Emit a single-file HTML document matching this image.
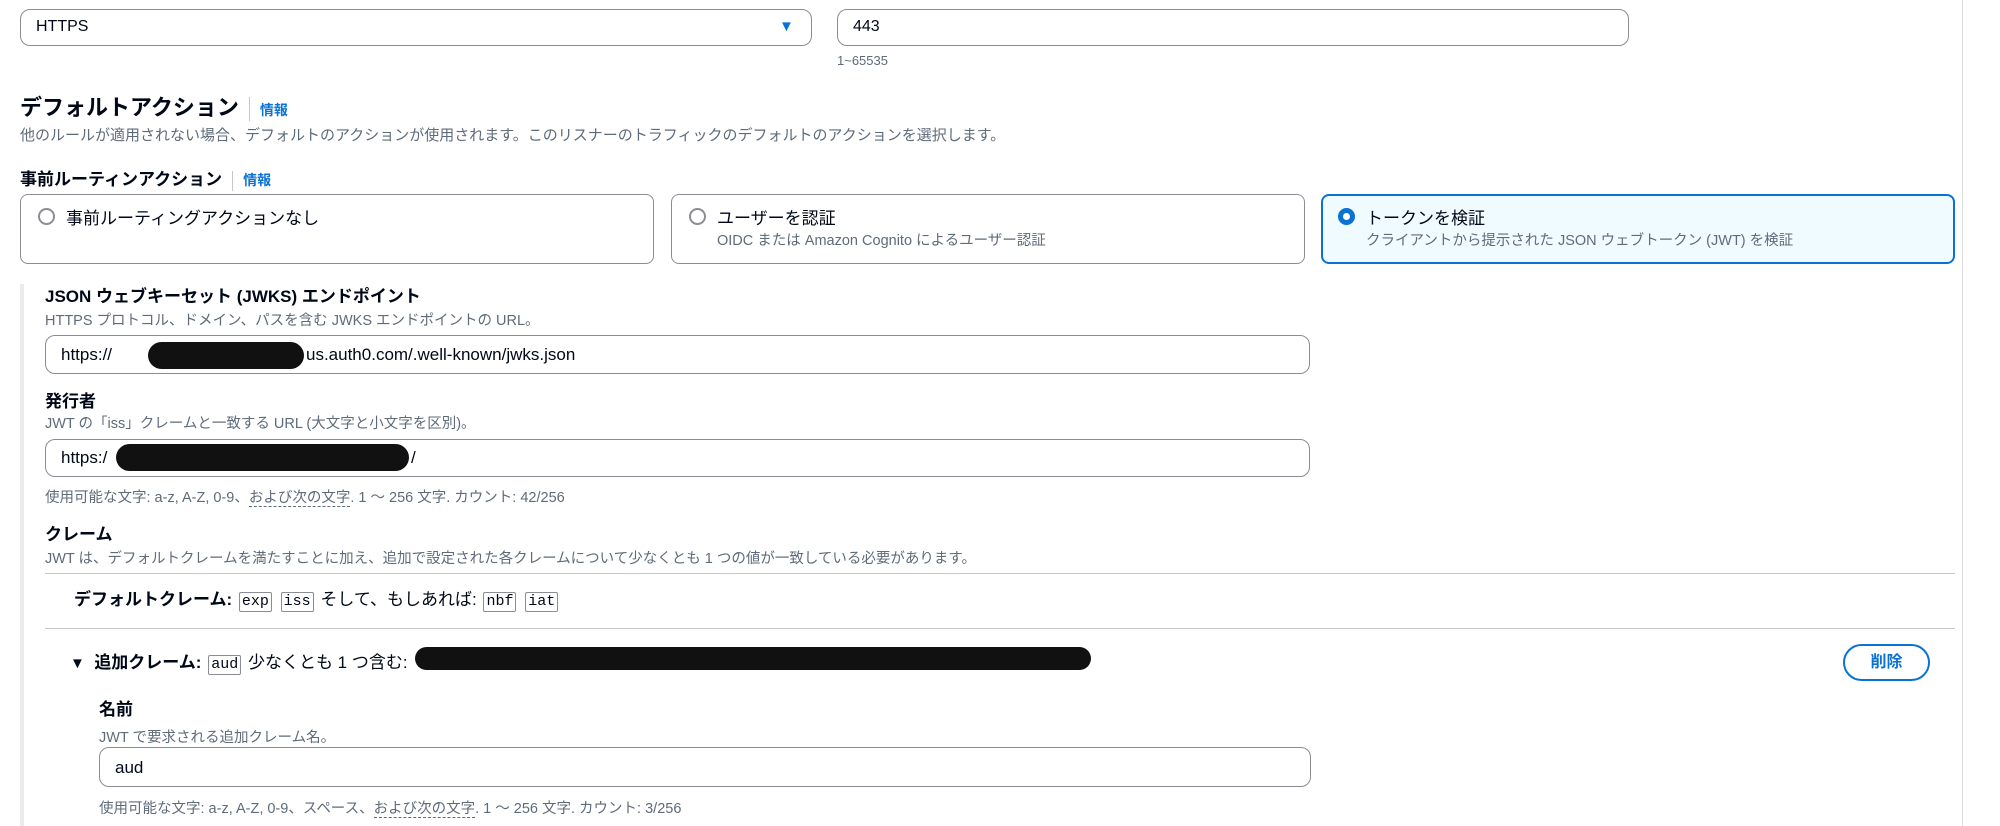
<!DOCTYPE html>
<html><head><meta charset="utf-8"><style>
*{margin:0;padding:0;box-sizing:border-box}
body{width:2000px;height:826px;background:#fff;position:relative;overflow:hidden;font-family:"Liberation Sans","Noto Sans CJK JP",sans-serif;color:#000716}
.a{position:absolute;white-space:nowrap}
.box{position:absolute;border:1px solid #8c8c94;border-radius:10px;background:#fff}
.lbl{font-weight:bold;font-size:17px}
.desc{font-size:14.5px;color:#5f6b7a}
.in{font-size:17px;line-height:1}
.blob{position:absolute;background:#111;border-radius:14px}
.tag{display:inline-block;border:1px solid #8c8c94;border-radius:2px;padding:0 2px;font-family:"Liberation Mono",monospace;font-size:15px;font-weight:normal;line-height:18px;margin:0 2px}
.link{color:#0972d3;font-weight:bold;font-size:14px}
.sep{display:inline-block;width:1px;height:20px;background:#c6c6cd;vertical-align:middle;margin:0 10px}
.dot{border-bottom:1px dashed #5f6b7a}
.radio{position:absolute;width:17px;height:17px;border:2px solid #8c8c94;border-radius:50%}
</style></head><body>
<div style="position:absolute;left:1962px;top:0;width:1px;height:826px;background:#dcdcdf"></div>

<div class="box" style="left:20px;top:9px;width:792px;height:37px"></div>
<div class="a in" style="left:36px;top:19px;font-size:16px">HTTPS</div>
<div class="a" style="left:779px;top:18px;color:#0972d3;font-size:15px">▼</div>
<div class="box" style="left:837px;top:9px;width:792px;height:37px"></div>
<div class="a in" style="left:853px;top:19px;font-size:16px">443</div>
<div class="a desc" style="left:837px;top:53px;font-size:13px">1~65535</div>

<div class="a" style="left:20px;top:94px;font-size:22px;font-weight:bold;line-height:28px">デフォルトアクション<span class="sep" style="height:24px"></span><span class="link">情報</span></div>
<div class="a" style="left:20px;top:124px;font-size:15px;color:#5f6b7a">他のルールが適用されない場合、デフォルトのアクションが使用されます。このリスナーのトラフィックのデフォルトのアクションを選択します。</div>
<div class="a" style="left:20px;top:165px;font-size:17px;font-weight:bold">事前ルーティンアクション<span class="sep"></span><span class="link">情報</span></div>

<div class="box" style="left:20px;top:194px;width:634px;height:70px;border-radius:8px"></div>
<div class="radio" style="left:38px;top:208px"></div>
<div class="a" style="left:66px;top:204px;font-size:17px">事前ルーティングアクションなし</div>
<div class="box" style="left:671px;top:194px;width:634px;height:70px;border-radius:8px"></div>
<div class="radio" style="left:689px;top:208px"></div>
<div class="a" style="left:717px;top:204px;font-size:17px">ユーザーを認証</div>
<div class="a desc" style="left:717px;top:229px">OIDC または Amazon Cognito によるユーザー認証</div>
<div class="box" style="left:1321px;top:194px;width:634px;height:70px;border-radius:8px;border:2px solid #0972d3;background:#f0fbff"></div>
<div class="radio" style="left:1338px;top:208px;border:5px solid #0972d3;background:#fff"></div>
<div class="a" style="left:1366px;top:204px;font-size:17px">トークンを検証</div>
<div class="a desc" style="left:1366px;top:229px">クライアントから提示された JSON ウェブトークン (JWT) を検証</div>

<div style="position:absolute;left:20px;top:284px;width:4px;height:542px;background:#e9ebed"></div>

<div class="a lbl" style="left:45px;top:282px">JSON ウェブキーセット (JWKS) エンドポイント</div>
<div class="a desc" style="left:45px;top:309px">HTTPS プロトコル、ドメイン、パスを含む JWKS エンドポイントの URL。</div>
<div class="box" style="left:45px;top:335px;width:1265px;height:39px"></div>
<div class="a in" style="left:61px;top:346px">https://</div>
<div class="a in" style="left:306px;top:346px">us.auth0.com/.well-known/jwks.json</div>
<div class="blob" style="left:148px;top:342px;width:156px;height:27px"></div>

<div class="a lbl" style="left:45px;top:387px">発行者</div>
<div class="a desc" style="left:45px;top:412px">JWT の「iss」クレームと一致する URL (大文字と小文字を区別)。</div>
<div class="box" style="left:45px;top:439px;width:1265px;height:38px"></div>
<div class="a in" style="left:61px;top:449px">https:/</div>
<div class="a in" style="left:411px;top:449px">/</div>
<div class="blob" style="left:116px;top:444px;width:293px;height:27px"></div>
<div class="a desc" style="left:45px;top:486px">使用可能な文字: a-z, A-Z, 0-9、<span class="dot">および次の文字</span>. 1 ～ 256 文字. カウント: 42/256</div>

<div class="a lbl" style="left:45px;top:520px">クレーム</div>
<div class="a desc" style="left:45px;top:547px">JWT は、デフォルトクレームを満たすことに加え、追加で設定された各クレームについて少なくとも 1 つの値が一致している必要があります。</div>
<div style="position:absolute;left:45px;top:573px;width:1910px;height:1px;background:#c6c6cd"></div>
<div class="a" style="left:74px;top:585px;font-size:17px"><b>デフォルトクレーム:</b> <span class="tag">exp</span> <span class="tag">iss</span> そして、もしあれば: <span class="tag">nbf</span> <span class="tag">iat</span></div>
<div style="position:absolute;left:45px;top:628px;width:1910px;height:1px;background:#c6c6cd"></div>
<div class="a" style="left:70px;top:648px;font-size:17px"><span style="font-size:15px">▼</span>&nbsp; <b>追加クレーム:</b> <span class="tag">aud</span> 少なくとも 1 つ含む:</div>
<div class="blob" style="left:415px;top:647px;width:676px;height:23px"></div>
<div class="a" style="left:1843px;top:644px;width:87px;height:37px;border:2px solid #0972d3;border-radius:20px;color:#0972d3;font-weight:bold;font-size:16px;text-align:center;line-height:33px">削除</div>

<div class="a lbl" style="left:99px;top:695px">名前</div>
<div class="a desc" style="left:99px;top:726px">JWT で要求される追加クレーム名。</div>
<div class="box" style="left:99px;top:747px;width:1212px;height:40px"></div>
<div class="a in" style="left:115px;top:759px">aud</div>
<div class="a desc" style="left:99px;top:797px">使用可能な文字: a-z, A-Z, 0-9、スペース、<span class="dot">および次の文字</span>. 1 ～ 256 文字. カウント: 3/256</div>
</body></html>
